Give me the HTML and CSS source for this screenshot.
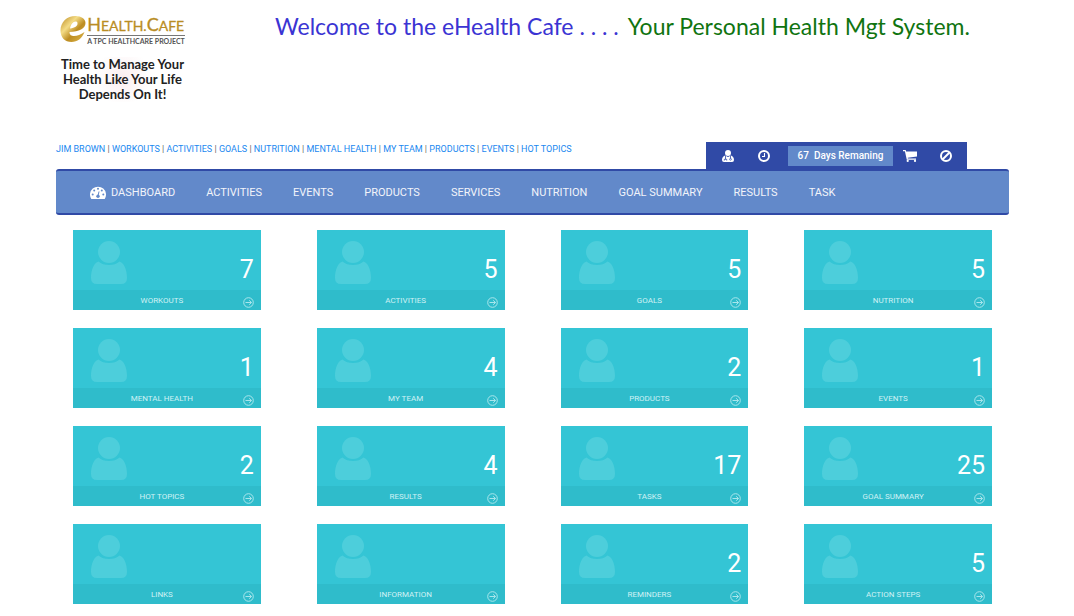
FILE: index.html
```
<!DOCTYPE html>
<html lang="en">
<head>
<meta charset="utf-8">
<meta name="viewport" content="width=device-width, initial-scale=1">
<title>eHealth Cafe</title>
<link rel="stylesheet" href="styles.css">
</head>
<body>
<svg class="sprite" aria-hidden="true">
  <symbol id="person" viewBox="0 0 36 44">
    <circle cx="18" cy="11" r="11"/>
    <path d="M7.500 20.500C10 23 14 24 18 24s8-1 10.500-3.500C33 21.500 36 29 36 37q0 6-6 6H6q-6 0-6-6C0 29 3 21.500 7.500 20.500z"/>
  </symbol>
  <symbol id="arrow" viewBox="0 0 11 11">
    <circle cx="5.500" cy="5.500" r="4.800"/>
    <path d="M2.500 5.500h6M6.200 3.300l2.300 2.200-2.300 2.200"/>
  </symbol>
</svg>
<div class="page">
  <header class="header">
    <a class="brand" href="#">
      <span class="logo">
        <svg class="logo-mark" viewBox="0 0 26 28" aria-hidden="true">
          <defs>
            <linearGradient id="gold" x1="0" y1="0" x2="1" y2="1">
              <stop offset="0" stop-color="#b8861c"/><stop offset=".35" stop-color="#f4dc86"/>
              <stop offset=".6" stop-color="#bd8d22"/><stop offset="1" stop-color="#dfb94d"/>
            </linearGradient>
          </defs>
          <path fill="url(#gold)" fill-rule="evenodd" d="M24.500 17C22 23.500 17.500 27 11.500 27C5 27 .5 22.500 .5 15.500C.5 7 7 1 15.500 1C21.500 1 25.500 4 25.500 8C25.500 13.500 19 17 9.500 17C9.500 20 11.500 21 14 21C17.500 21 20.500 19.500 24.500 17zM10 13.500C15 13 17.500 11 17.500 8.500C17.500 7 16.800 6.500 15.500 6.500C13 6.500 10.700 9.500 10 13.500z"/>
        </svg>
        <span class="logo-text">
          <span class="logo-name"><b>H</b>EALTH.<b>C</b>AFE</span>
          <span class="logo-sub">A TPC H<small>EALTH</small>C<small>ARE</small> P<small>ROJECT</small></span>
        </span>
      </span>
      <span class="tagline">Time to Manage Your<br>Health Like Your Life<br>Depends On It!</span>
    </a>
    <h1 class="welcome"><span class="welcome-blue">Welcome to the eHealth Cafe . . . .</span><span class="welcome-green">Your Personal Health Mgt System.</span></h1>
  </header>

  <div class="topbar">
    <nav class="crumbs" aria-label="Quick links">
      <a href="#">JIM BROWN</a> | <a href="#">WORKOUTS</a> | <a href="#">ACTIVITIES</a> | <a href="#">GOALS</a> | <a href="#">NUTRITION</a> | <a href="#">MENTAL HEALTH</a> | <a href="#">MY TEAM</a> | <a href="#">PRODUCTS</a> | <a href="#">EVENTS</a> | <a href="#">HOT TOPICS</a>
    </nav>
    <div class="tools">
      <button class="tool" type="button" aria-label="Profile">
        <svg viewBox="0 0 12 12"><circle cx="6" cy="3" r="3" fill="#fff"/><path fill="#fff" d="M3 5.500L6 7l3-1.500c2 .5 3 2.500 3 4.500q0 2-2 2H2q-2 0-2-2C0 8 1 6 3 5.500z"/><path d="M3.500 6v3M2.300 10.500V9.300h2.400v1.200M8.500 6v2.500" fill="none" stroke="#304aa6" stroke-width=".8"/><circle cx="8.500" cy="9.300" r=".9" fill="none" stroke="#304aa6" stroke-width=".7"/></svg>
      </button>
      <button class="tool" type="button" aria-label="History">
        <svg viewBox="0 0 12 12" fill="none" stroke="#fff"><circle cx="6" cy="6" r="5" stroke-width="2"/><path d="M6.500 3v3.500H4" stroke-width="1.100"/></svg>
      </button>
      <span class="remaining">67&nbsp; Days Remaning</span>
      <button class="tool" type="button" aria-label="Cart">
        <svg class="cart" viewBox="0 0 14 12"><path fill="#fff" d="M0 0h2.700l.4 1.500H14v5L4.700 7.700l.2.800H13v1.200H3.800L1.900 1.200H0z"/><circle cx="4.700" cy="10.900" r="1.100" fill="#fff"/><circle cx="12" cy="10.900" r="1.100" fill="#fff"/></svg>
      </button>
      <button class="tool" type="button" aria-label="Sign out">
        <svg viewBox="0 0 12 12" fill="none" stroke="#fff" stroke-width="2"><circle cx="6" cy="6" r="5"/><path d="M2.500 9.500l7-7"/></svg>
      </button>
    </div>
  </div>

  <nav class="mainnav" aria-label="Main">
    <a href="#"><svg class="gauge" viewBox="0 0 16 13" aria-hidden="true"><path fill="#fff" d="M1.300 13A8 8 0 1 1 14.700 13z"/><g fill="#6289ca"><circle cx="2.700" cy="8.500" r="1"/><circle cx="4.200" cy="4.500" r="1"/><circle cx="8" cy="2.800" r="1"/><circle cx="11.800" cy="4.500" r="1"/><circle cx="13.300" cy="8.500" r="1"/><circle cx="8" cy="10.300" r="1.700"/></g><path d="M8 10l1-4.500" stroke="#6289ca"/></svg>DASHBOARD</a>
    <a href="#">ACTIVITIES</a>
    <a href="#">EVENTS</a>
    <a href="#">PRODUCTS</a>
    <a href="#">SERVICES</a>
    <a href="#">NUTRITION</a>
    <a href="#">GOAL SUMMARY</a>
    <a href="#">RESULTS</a>
    <a href="#">TASK</a>
  </nav>

  <main class="cards">
    <a class="card" href="#"><span class="card-body"><svg class="person"><use href="#person"/></svg><span class="count">7</span></span><span class="card-foot"><span class="label">WORKOUTS</span><svg class="arrow"><use href="#arrow"/></svg></span></a>
    <a class="card" href="#"><span class="card-body"><svg class="person"><use href="#person"/></svg><span class="count">5</span></span><span class="card-foot"><span class="label">ACTIVITIES</span><svg class="arrow"><use href="#arrow"/></svg></span></a>
    <a class="card" href="#"><span class="card-body"><svg class="person"><use href="#person"/></svg><span class="count">5</span></span><span class="card-foot"><span class="label">GOALS</span><svg class="arrow"><use href="#arrow"/></svg></span></a>
    <a class="card" href="#"><span class="card-body"><svg class="person"><use href="#person"/></svg><span class="count">5</span></span><span class="card-foot"><span class="label">NUTRITION</span><svg class="arrow"><use href="#arrow"/></svg></span></a>
    <a class="card" href="#"><span class="card-body"><svg class="person"><use href="#person"/></svg><span class="count">1</span></span><span class="card-foot"><span class="label">MENTAL HEALTH</span><svg class="arrow"><use href="#arrow"/></svg></span></a>
    <a class="card" href="#"><span class="card-body"><svg class="person"><use href="#person"/></svg><span class="count">4</span></span><span class="card-foot"><span class="label">MY TEAM</span><svg class="arrow"><use href="#arrow"/></svg></span></a>
    <a class="card" href="#"><span class="card-body"><svg class="person"><use href="#person"/></svg><span class="count">2</span></span><span class="card-foot"><span class="label">PRODUCTS</span><svg class="arrow"><use href="#arrow"/></svg></span></a>
    <a class="card" href="#"><span class="card-body"><svg class="person"><use href="#person"/></svg><span class="count">1</span></span><span class="card-foot"><span class="label">EVENTS</span><svg class="arrow"><use href="#arrow"/></svg></span></a>
    <a class="card" href="#"><span class="card-body"><svg class="person"><use href="#person"/></svg><span class="count">2</span></span><span class="card-foot"><span class="label">HOT TOPICS</span><svg class="arrow"><use href="#arrow"/></svg></span></a>
    <a class="card" href="#"><span class="card-body"><svg class="person"><use href="#person"/></svg><span class="count">4</span></span><span class="card-foot"><span class="label">RESULTS</span><svg class="arrow"><use href="#arrow"/></svg></span></a>
    <a class="card" href="#"><span class="card-body"><svg class="person"><use href="#person"/></svg><span class="count">17</span></span><span class="card-foot"><span class="label">TASKS</span><svg class="arrow"><use href="#arrow"/></svg></span></a>
    <a class="card" href="#"><span class="card-body"><svg class="person"><use href="#person"/></svg><span class="count">25</span></span><span class="card-foot"><span class="label">GOAL SUMMARY</span><svg class="arrow"><use href="#arrow"/></svg></span></a>
    <a class="card" href="#"><span class="card-body"><svg class="person"><use href="#person"/></svg></span><span class="card-foot"><span class="label">LINKS</span><svg class="arrow"><use href="#arrow"/></svg></span></a>
    <a class="card" href="#"><span class="card-body"><svg class="person"><use href="#person"/></svg></span><span class="card-foot"><span class="label">INFORMATION</span><svg class="arrow"><use href="#arrow"/></svg></span></a>
    <a class="card" href="#"><span class="card-body"><svg class="person"><use href="#person"/></svg><span class="count">2</span></span><span class="card-foot"><span class="label">REMINDERS</span><svg class="arrow"><use href="#arrow"/></svg></span></a>
    <a class="card" href="#"><span class="card-body"><svg class="person"><use href="#person"/></svg><span class="count">5</span></span><span class="card-foot"><span class="label">ACTION STEPS</span><svg class="arrow"><use href="#arrow"/></svg></span></a>
  </main>
</div>
</body>
</html>
```
FILE: styles.css
```
* { box-sizing: border-box; }
body { margin: 0; background: #fff; font-family: Roboto, "Open Sans", sans-serif; color: #555; }
a { text-decoration: none; }
.sprite { display: none; }
.page { padding: 12px 65px 10px 56px; }

.header { display: flex; align-items: flex-start; gap: 86px; min-height: 130px; }
.brand { display: flex; flex-direction: column; align-items: center; color: #222; width: 133px; }
.logo { display: flex; align-items: center; gap: 1px; }
.logo-mark { width: 26px; height: 28px; }
.logo-text { display: flex; flex-direction: column; padding-top: 3px; }
.logo-name { font: 400 14px/18px Lato, sans-serif; color: #b98d24; -webkit-text-stroke: 0.3px #b98d24; border-bottom: 1px solid #777; white-space: nowrap; }
.logo-name b { font-size: 18px; font-weight: 400; }
.logo-sub { font: 700 7px/10px Lato, sans-serif; color: #555; white-space: nowrap; }
.logo-sub small { font-size: 7px; }
.tagline { margin-top: 11px; font: 700 13px/15px Lato, sans-serif; text-align: center; white-space: nowrap; background: radial-gradient(circle at 50% 45%, #fbeef0, #fff 28px); }
.welcome { display: flex; flex-wrap: wrap; gap: 0 9px; margin: 0; font-family: Lato, sans-serif; font-weight: 400; font-size: 23px; line-height: 28px; }
.welcome-blue { color: #3b34d3; }
.welcome-green { color: #107410; }

.topbar { display: flex; justify-content: space-between; align-items: stretch; padding-right: 42px; }
.crumbs { font-size: 9px; line-height: 14px; color: #666; }
.crumbs a { color: #1a88f0; }
.tools { display: flex; align-items: center; background: #304aa6; padding: 0 3px 0 4px; height: 27px; }
.tool { width: 36px; height: 27px; padding: 0; border: 0; background: none; display: flex; align-items: center; justify-content: center; }
.tool svg { width: 12px; height: 12px; }
.tool .cart { width: 14px; }
.remaining { width: 105px; margin: 1px 0 0 6px; margin-right: -1px; background: #6289ca; color: #fff; font-size: 10px; font-weight: 500; line-height: 20px; text-align: center; white-space: nowrap; }

.mainnav { display: flex; flex-wrap: wrap; align-items: center; gap: 0 31px; padding: 1px 34px 0; min-height: 46px; background: #6289ca; border: solid #304aa6; border-width: 2px 0; border-radius: 3px; }
.mainnav a { display: flex; align-items: center; gap: 5px; color: #f2f4fa; font-size: 11px; line-height: 21px; }
.gauge { width: 16px; height: 13px; }

.cards { display: grid; grid-template-columns: repeat(4, 1fr); gap: 18px 56px; padding: 15px 17px 0; }
.card { display: flex; flex-direction: column; background: #34c5d5; color: #fff; }
.card-body { display: flex; justify-content: space-between; height: 60px; padding: 11px 7px 0 18px; }
.person { width: 36px; height: 44px; fill: #4dcedb; }
.count { margin-left: auto; padding-top: 12px; font-size: 25px; line-height: 33px; }
.card-foot { display: flex; align-items: center; height: 20px; padding: 0 7px 0 8px; background: #2fbccb; }
.label { flex: 1; padding-top: 1px; text-align: center; font-size: 8px; line-height: 10px; color: #d0f2f5; }
.arrow { width: 11px; height: 11px; margin-top: 4px; fill: none; stroke: #a9e6ec; }
```
